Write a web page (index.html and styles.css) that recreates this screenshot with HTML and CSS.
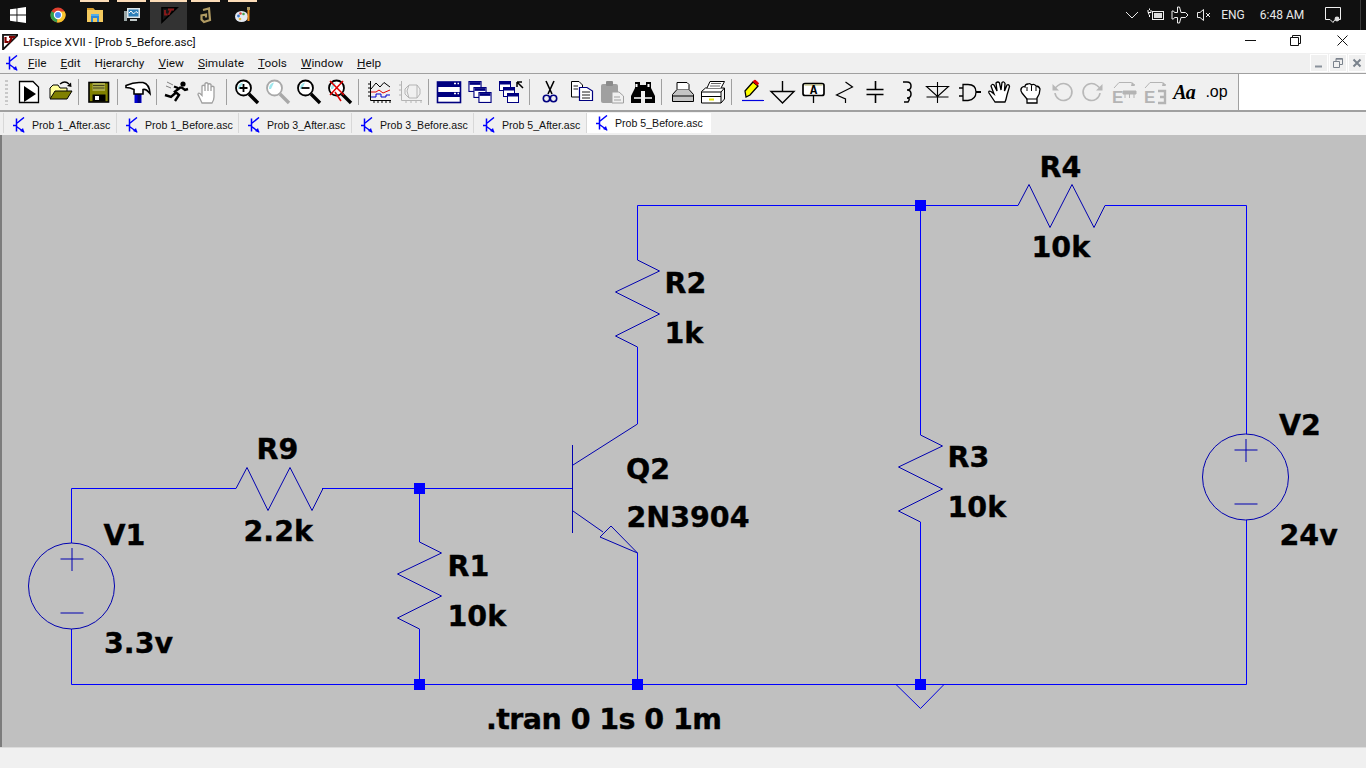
FILE: index.html
```html
<!DOCTYPE html>
<html lang="en">
<head>
<meta charset="utf-8">
<title>LTspice XVII - [Prob 5_Before.asc]</title>
<link rel="stylesheet" href="styles.css">
</head>
<body>
<svg class="sprite" aria-hidden="true">
  <symbol id="npn" viewBox="0 0 14 16">
    <path d="M1 8.5H4.5M4.5 1.5V14.5M4.5 6.5L12 .5M4.5 9.5L12 15" fill="none" stroke="#0000ff" stroke-width="1.5"/>
    <path d="M8 14L12.5 15.8L11 11Z" fill="#0000ff"/>
  </symbol>
  <symbol id="logo" viewBox="0 0 16 16">
    <path d="M1 .8H16L1 15.5Z" fill="#fff" stroke="#111" stroke-width="1.8"/>
    <path d="M3.5 3V8H6.5M7 3H13M10 3L7.5 8.5" fill="none" stroke="#800000" stroke-width="2.2"/>
  </symbol>
  <symbol id="mag" viewBox="0 0 26 26">
    <path d="M15 15L24 24" stroke="currentColor" stroke-width="3.4"/>
    <circle cx="9.5" cy="9" r="7.5" fill="#fff" stroke="currentColor" stroke-width="1.8"/>
    <path d="M4 10A6 6 0 0 1 9 3.5L6 10Z" fill="#9fe8ee"/>
  </symbol>
  <symbol id="win" viewBox="0 0 12 10">
    <rect x=".5" y=".5" width="11" height="9" fill="#fff" stroke="#000080"/>
    <rect x="1" y="1" width="10" height="2.5" fill="#000080"/>
  </symbol>
</svg>

<header class="taskbar">
  <div class="start">
    <svg class="ic16" viewBox="0 0 16 16"><path d="M0 2.3L6.5 1.4V7.6H0ZM7.4 1.3L16 0V7.6H7.4ZM0 8.5H6.5V14.7L0 13.8ZM7.4 8.5H16V16L7.4 14.8Z" fill="#fff"/></svg>
  </div>
  <div class="task">
    <svg class="ic16" viewBox="0 0 16 16"><circle cx="8" cy="8" r="7.5" fill="#e0402f"/><path d="M8 8L1.4 4.2A7.5 7.5 0 0 0 7 15.4Z" fill="#33a04f"/><path d="M8 8L7 15.4A7.5 7.5 0 0 0 14.7 4.5H8Z" fill="#f6c42d"/><circle cx="8" cy="8" r="3.6" fill="#4a8bf0" stroke="#fff" stroke-width="1.2"/></svg>
  </div>
  <div class="task open">
    <svg class="ic16" viewBox="0 0 16 16"><path d="M0 1H6L8 3H16V15H0Z" fill="#f4ca5e"/><path d="M0 1H6L7 3H0Z" fill="#d69a2a"/><path d="M4 8H12V15H10V11H6V15H4Z" fill="#2f8ad8"/><rect x="4" y="7" width="8" height="2" fill="#55aee8"/></svg>
  </div>
  <div class="task open">
    <svg class="ic16" viewBox="0 0 16 16"><rect y="4" width="3" height="10" fill="#9aa6a6"/><rect x="3" y="1" width="13" height="10" fill="#dfe7ea"/><rect x="4.5" y="2.5" width="10" height="7" fill="#2e7fb8"/><path d="M5 6L7 4L9.5 7L12 4.5L14 6" fill="none" stroke="#fff"/><rect x="6" y="12" width="7" height="2" fill="#c0c8c8"/></svg>
  </div>
  <div class="task open active">
    <svg class="ic16" viewBox="0 0 16 16"><path d="M1 .8H16L1 15.2Z" fill="#161616" stroke="#000" stroke-width="1.6"/><path d="M4 3V7.5H6.5M7 2.5H13M10 2.5L7.5 8" fill="none" stroke="#8b1a1a" stroke-width="1.8"/></svg>
  </div>
  <div class="task open">
    <svg class="ic16" viewBox="0 0 16 16"><path d="M5 3L11 1.5L12 13L6 15L3.5 12.5V8.5L8 7.5V10.5" fill="none" stroke="#b09a62" stroke-width="2.2"/></svg>
  </div>
  <div class="task open">
    <svg class="ic16" viewBox="0 0 16 16"><ellipse cx="6.5" cy="9.5" rx="6.5" ry="5.5" fill="#e4e9f2"/><circle cx="3.5" cy="9" r="1.4" fill="#3b79c8"/><circle cx="5.5" cy="6.5" r="1.3" fill="#d8423a"/><circle cx="8.5" cy="7" r="1.3" fill="#49a04e"/><circle cx="5" cy="12" r="1.3" fill="#e8b93a"/><path d="M13.5 1V14" stroke="#e88a1e" stroke-width="2"/><rect x="12" y="0" width="3" height="3" fill="#b09a62"/></svg>
  </div>
  <div class="tray">
    <span class="slot s24"><svg class="ic14" viewBox="0 0 14 14"><path d="M1 4L7 10L13 4" fill="none" stroke="#e8e8e8"/></svg></span>
    <span class="slot s24"><svg class="ic18" viewBox="0 0 18 14"><path d="M1 2V4.5H4V2M2.5 .5V2M1.5 4.5Q1.5 7 2.5 7V9" fill="none" stroke="#fff"/><rect x="5.5" y="3.5" width="11" height="8" fill="none" stroke="#eee"/><rect x="7" y="5" width="8" height="5" fill="#ddd"/></svg></span>
    <span class="slot s24"><svg class="ic18" viewBox="0 0 18 18"><path d="M6.5 1H8.5L10 6.5H14.5L17 9L14.5 11.5H10L8.5 17H6.5V11.5H3.5L2.5 13H1V5H2.5L3.5 6.5H6.5Z" fill="none" stroke="#eee"/></svg></span>
    <span class="slot s23"><svg class="ic16" viewBox="0 0 16 16"><path d="M1.5 5.5H4L7.5 2.5V13.5L4 10.5H1.5Z" fill="none" stroke="#e8e8e8"/><path d="M10 6L14 10M14 6L10 10" stroke="#e8e8e8"/></svg></span>
    <span class="slot s36 tray-text">ENG</span>
    <span class="slot s62 tray-text">6:48 AM</span>
    <span class="slot s40"><svg class="ic18" viewBox="0 0 18 18"><path d="M1.5 1.5H16.5V13.5H11L9 16.5L6 13.5H1.5Z" fill="none" stroke="#f0f0f0"/><circle cx="13" cy="13" r="2.4" fill="#ddd"/></svg></span>
    <span class="desk-line"></span>
  </div>
</header>

<div class="titlebar">
  <svg class="title-logo"><use href="#logo"/></svg>
  <span class="title-text">LTspice XVII - [Prob 5_Before.asc]</span>
  <span class="win-btn w46"><svg class="ic11" viewBox="0 0 11 11"><path d="M0 5.5H11" stroke="#111"/></svg></span>
  <span class="win-btn w45"><svg class="ic11" viewBox="0 0 11 11"><path d="M.5 2.5H8.5V10.5H.5ZM2.5 2V.5H10.5V8.5H9" fill="none" stroke="#111"/></svg></span>
  <span class="win-btn w48"><svg class="ic11" viewBox="0 0 11 11"><path d="M.5 .5L10.5 10.5M10.5 .5L.5 10.5" stroke="#111"/></svg></span>
</div>

<nav class="menubar">
  <svg class="menu-logo"><use href="#npn"/></svg>
  <span class="menu-item"><u>F</u>ile</span>
  <span class="menu-item"><u>E</u>dit</span>
  <span class="menu-item">H<u>i</u>erarchy</span>
  <span class="menu-item"><u>V</u>iew</span>
  <span class="menu-item"><u>S</u>imulate</span>
  <span class="menu-item"><u>T</u>ools</span>
  <span class="menu-item"><u>W</u>indow</span>
  <span class="menu-item"><u>H</u>elp</span>
  <div class="mdi">
    <span class="mdi-btn"><svg class="ic10" viewBox="0 0 10 10"><path d="M1 8.5H8" stroke="#8a929c" stroke-width="2"/></svg></span>
    <span class="mdi-btn"><svg class="ic10" viewBox="0 0 10 10"><path d="M.5 3.5H6.5V9.5H.5ZM3 3V.5H9.5V6.5H7M3 1.2H9.5" fill="none" stroke="#7a828c"/></svg></span>
    <span class="mdi-btn"><svg class="ic10" viewBox="0 0 10 10"><path d="M1.5 1.5L8.5 8.5M8.5 1.5L1.5 8.5" stroke="#7a828c" stroke-width="2"/></svg></span>
  </div>
</nav>

<div class="toolbar">
  <div class="tools">
    <span class="grip"></span>
    <span class="tb"><svg class="ic26" viewBox="0 0 26 26"><path d="M3.5 2.5H17L22.5 8V23.5H3.5Z" fill="#fff" stroke="#000" stroke-width="1.3"/><path d="M8 7L20 15L8 23Z"/></svg></span>
    <span class="tb"><svg class="ic26" viewBox="0 0 26 26"><path d="M3 19V9L6 6H11L13 9H20V12" fill="#ffff9a" stroke="#000"/><path d="M3 20L8 12H25L20 20Z" fill="#808000" stroke="#000"/><path d="M13 5Q18 1 22 5" fill="none" stroke="#000" stroke-width="1.3"/><path d="M20 7L24.5 8L24 3.5Z"/></svg></span>
    <span class="sep"></span>
    <span class="tb"><svg class="ic26" viewBox="0 0 26 26"><rect x="3" y="3.5" width="19.5" height="19.5" fill="#808000" stroke="#000" stroke-width="1.6"/><rect x="6.5" y="4" width="12.5" height="8" fill="#a9a94a"/><path d="M7 6.5H18.5M7 9H18.5" stroke="#000" stroke-width=".6"/><rect x="6.5" y="15.5" width="13" height="7" fill="#000"/><rect x="9" y="17" width="4" height="4" fill="#fff"/></svg></span>
    <span class="sep"></span>
    <span class="tb"><svg class="ic26" viewBox="0 0 26 26"><rect x="9.5" y="15" width="7" height="9" fill="#0000d0"/><rect x="12.5" y="15" width="3" height="9" fill="#000080"/><path d="M1 6.5Q8 3.5 14 3.5H18Q24.5 5 25 14.5Q21 9.5 18 10.5V15H9V10.5Q5 8.5 1 8.5Z" fill="#fff" stroke="#000" stroke-width="1.6"/></svg></span>
    <span class="sep"></span>
    <span class="tb"><svg class="ic26" viewBox="0 0 26 26"><path d="M17 8L11 12.5L15 16L11 22M17 8L21 11L24 10M14 9L10 7.5M11.5 14L7 18L1 16" fill="none" stroke="#000" stroke-width="2.4"/><circle cx="19" cy="5" r="2.6"/><path d="M3 3L9 6M2 7L7 9" stroke="#808080"/></svg></span>
    <span class="tb"><svg class="ic26" viewBox="0 0 26 26"><path d="M7 24L3 15.5Q3 13.5 5 14.5L7 16.5V7Q8.5 5.5 10 7V12V4.5Q11.5 3 13 4.5V12V5.5Q14.5 4 16 5.5V12V8Q17.5 6.5 19 8V18Q19 21 17 24Z" fill="#fff" stroke="#a0a0a0" stroke-width="1.3"/></svg></span>
    <span class="sep"></span>
    <span class="tb"><svg class="ic26"><use href="#mag"/><path d="M9.5 5V13M5.5 9H13.5" stroke="#000" stroke-width="1.8"/></svg></span>
    <span class="tb gray"><svg class="ic26"><use href="#mag"/></svg></span>
    <span class="tb"><svg class="ic26"><use href="#mag"/><path d="M5.5 9H13.5" stroke="#000" stroke-width="1.8"/></svg></span>
    <span class="tb"><svg class="ic26"><use href="#mag"/><path d="M3 2L17 16M16 2L3 16M8 13L14 22" stroke="#e00000" stroke-width="1.5"/></svg></span>
    <span class="sep"></span>
    <span class="tb"><svg class="ic26" viewBox="0 0 26 26"><path d="M4.5 2V21.5H25M4.5 5H2M4.5 9H2M4.5 13H2M4.5 17H2M8 21.5V24M12 21.5V24M16 21.5V24M20 21.5V24M24 21.5V24" fill="none" stroke="#000"/><path d="M5 10L10 4L14 8L18 3.5L24 8" fill="none" stroke="#000"/><path d="M5 13H10L13 11L17 14L24 11" fill="none" stroke="#e00000"/><path d="M5 18H10V15H15V18H20V16H24" fill="none" stroke="#0000d0"/></svg></span>
    <span class="tb"><svg class="ic26" viewBox="0 0 26 26"><path d="M4.5 2V21.5H25M4.5 6H2M4.5 11H2M4.5 16H2M9 21.5V24M14 21.5V24M19 21.5V24M24 21.5V24M8 10L12 6H20L23 10V15L20 19H12L8 15ZM12 6L10 12L12 19M20 6V19" fill="none" stroke="#b4b4b4"/></svg></span>
    <span class="sep"></span>
    <span class="tb"><svg class="ic26" viewBox="0 0 26 26"><rect x="1.5" y="3" width="23" height="20.5" fill="#fff" stroke="#000080" stroke-width="1.6"/><rect x="1.5" y="3" width="23" height="5" fill="#000080"/><rect x="1.5" y="13" width="23" height="5" fill="#000080"/><path d="M18 4.5H20M21.5 4.5H23M18 14.5H20M21.5 14.5H23" stroke="#fff" stroke-width="1.4"/></svg></span>
    <span class="tb"><svg class="ic26" viewBox="0 0 26 26"><use href="#win" x="1" y="2" width="14" height="11"/><use href="#win" x="6" y="8" width="14" height="11"/><use href="#win" x="11" y="13" width="14" height="11"/></svg></span>
    <span class="tb"><svg class="ic26" viewBox="0 0 26 26"><use href="#win" x="1" y="2" width="12" height="10"/><use href="#win" x="5" y="8" width="12" height="10"/><use href="#win" x="9" y="14" width="12" height="10"/><path d="M19 3H24M19 3V8M19 3L25 9" fill="none" stroke="#000" stroke-width="1.5"/></svg></span>
    <span class="sep"></span>
    <span class="tb"><svg class="ic26" viewBox="0 0 26 26"><path d="M9 2L15 15M17 2L11 15" stroke="#000" stroke-width="1.6"/><circle cx="9.5" cy="19.5" r="3.2" fill="none" stroke="#000080" stroke-width="1.6"/><circle cx="16.5" cy="19.5" r="3.2" fill="none" stroke="#000080" stroke-width="1.6"/></svg></span>
    <span class="tb"><svg class="ic26" viewBox="0 0 26 26"><path d="M3.5 2.5H11L14.5 6V18H3.5Z" fill="#fff" stroke="#000"/><path d="M11.5 8.5H19L24.5 12V21.5H11.5Z" fill="#fff" stroke="#000080" stroke-width="1.2"/><path d="M5.5 7H10M5.5 10H10M14 13H22M14 16H22M14 19H22" stroke="#000" stroke-width=".9"/></svg></span>
    <span class="tb"><svg class="ic26" viewBox="0 0 26 26"><rect x="2" y="5" width="17" height="19" rx="2" fill="#a0a0a0"/><rect x="7" y="2" width="7" height="5" rx="1" fill="#8a8a8a"/><path d="M13 13H20L24.5 17V24H13Z" fill="#f0f0f0" stroke="#a0a0a0"/><path d="M15 18H21M15 21H22" stroke="#a0a0a0"/></svg></span>
    <span class="tb"><svg class="ic26" viewBox="0 0 26 26"><path d="M5 3H10V6H16V3H21V9L25 17V24H15V12H11V24H1V17L5 9Z"/><path d="M4 19H11M15 19H22" stroke="#fff" stroke-width="1.4"/><rect x="5.5" y="5" width="2" height="3" fill="#fff"/><rect x="17.5" y="5" width="2" height="3" fill="#fff"/></svg></span>
    <span class="sep"></span>
    <span class="tb"><svg class="ic26" viewBox="0 0 26 26"><path d="M3.5 15.5L8 10.5H20L24.5 15.5V22.5H3.5Z" fill="#c4c4c4" stroke="#000"/><path d="M8 10.5V3.5H18L20 5.5V10.5" fill="#fff" stroke="#000"/><path d="M3.5 17H24.5" stroke="#000"/></svg></span>
    <span class="tb"><svg class="ic26" viewBox="0 0 26 26"><path d="M1.5 12.5L5.5 9H24.5L21 13V24H1.5Z" fill="#fff" stroke="#000"/><path d="M21 13H1.5M24.5 9V20L21 24M1.5 17.5H21" fill="none" stroke="#000"/><path d="M7 9L10 2.5H24.5L21 9" fill="#fff" stroke="#000"/><path d="M11 4.5H21M10 7H20" stroke="#666"/><rect x="9" y="19.5" width="5" height="2" fill="#e4e400"/></svg></span>
    <span class="sep"></span>
    <span class="tb"><svg class="ic26" viewBox="0 0 26 26"><path d="M3 21.5H25" stroke="#0000e0" stroke-width="1.2"/><path d="M7 18L6 12L14 3L19 7L11 16Z" fill="#ffff00" stroke="#000" stroke-width="1.3"/><path d="M14 2.5L16 1L19.5 4L18.5 6Z" fill="#e00000" stroke="#e00000"/></svg></span>
    <span class="tb"><svg class="ic26" viewBox="0 0 26 26"><path d="M12.5 2V12.5M1 12.5H24L12.5 24Z" fill="none" stroke="#000" stroke-width="1.4"/></svg></span>
    <span class="tb"><svg class="ic26" viewBox="0 0 26 26"><rect x="2" y="4.5" width="21" height="12" rx="2" fill="#fff" stroke="#000" stroke-width="1.7"/><path d="M3.5 6H21.5" stroke="#a0a040" stroke-width=".8"/><path d="M12.5 16.5V24" stroke="#000" stroke-width="1.3"/><text class="glyph-a" x="12.5" y="14.5">A</text></svg></span>
    <span class="tb"><svg class="ic26" viewBox="0 0 26 26"><path d="M13.5 3L20.5 8L4.5 16L13.5 20V24" fill="none" stroke="#000" stroke-width="1.2"/></svg></span>
    <span class="tb"><svg class="ic26" viewBox="0 0 26 26"><path d="M12.5 2V10M12.5 16V24M3.5 10.5H20.5M3.5 15.5H20.5" stroke="#000" stroke-width="1.6"/></svg></span>
    <span class="tb"><svg class="ic26" viewBox="0 0 26 26"><path d="M9 3H13Q17 3 17 7T13 11Q17 11 17 15T13 19Q17 19 14 23H10" fill="none" stroke="#000" stroke-width="1.5"/></svg></span>
    <span class="tb"><svg class="ic26" viewBox="0 0 26 26"><path d="M12.5 3V24M1.5 7.5H23.5L12.5 17.5ZM1.5 18H23.5" fill="none" stroke="#000" stroke-width="1.1"/></svg></span>
    <span class="tb"><svg class="ic26" viewBox="0 0 26 26"><path d="M7 5.5H12Q20 5.5 20 13T12 21.5H7ZM3 9H7M3 17H7" fill="none" stroke="#000" stroke-width="1.3"/><path d="M20 13H25" stroke="#000" stroke-width="2"/></svg></span>
    <span class="tb"><svg class="ic26" viewBox="0 0 26 26"><path d="M8 23L2 14Q1 11.5 4 12.5L7 15L4 7Q5 4.5 7 6L10 12L9 4Q11 2 12.5 4L14 11L15 3.5Q17 2 18 4.5L17.5 12L20 6Q22 5 22.5 7.5L20 16Q19 21 18 23Z" fill="#fff" stroke="#000" stroke-width="1.3"/></svg></span>
    <span class="tb"><svg class="ic26" viewBox="0 0 26 26"><path d="M9 24V20L4 14Q2 11 3.5 9Q5 7 7 8Q7 5 10 5Q12 4 13.5 6Q16 4.5 18 7Q21 7 22 10Q22 15 19 19V24Z" fill="#fff" stroke="#000" stroke-width="1.3"/><path d="M9 8V12M13.5 6.5V12M18 8V12M8 20H19" stroke="#000"/></svg></span>
    <span class="tb"><svg class="ic26" viewBox="0 0 26 26"><path d="M6 14A8.5 8.5 0 1 0 9 6.5L5 10" fill="none" stroke="#b8b8b8" stroke-width="1.6"/><path d="M3.5 5V11.5H10Z" fill="#b8b8b8"/></svg></span>
    <span class="tb"><svg class="ic26" viewBox="0 0 26 26"><path d="M20 14A8.5 8.5 0 1 1 17 6.5L21 10" fill="none" stroke="#b8b8b8" stroke-width="1.6"/><path d="M22.5 5V11.5H16Z" fill="#b8b8b8"/></svg></span>
    <span class="tb"><svg class="ic26" viewBox="0 0 26 26"><path d="M3 9L8 3.5H20L24 6" fill="none" stroke="#b4b4b4"/><path d="M21 3L24 7H20Z" fill="#b4b4b4"/><text class="glyph-e" x="1" y="24">E</text><path d="M12 12H25V15H12ZM14 15V19M18.5 15V19M23 15V19" fill="#b4b4b4" stroke="#b4b4b4"/></svg></span>
    <span class="tb"><svg class="ic26" viewBox="0 0 26 26"><path d="M3 9L8 3.5H20L24 6" fill="none" stroke="#b4b4b4"/><path d="M21 3L24 7H20Z" fill="#b4b4b4"/><text class="glyph-e" x="2" y="24">E</text><path d="M16 12H23V24H16M18 18H23" fill="none" stroke="#b4b4b4" stroke-width="2.4"/></svg></span>
    <span class="tb"><span class="aa">Aa</span></span>
    <span class="tb"><span class="op">.op</span></span>
  </div>
</div>

<div class="tabs">
  <span class="tab short"><svg class="tab-ic"><use href="#npn"/></svg>Prob 1_After.asc</span>
  <span class="tab long"><svg class="tab-ic"><use href="#npn"/></svg>Prob 1_Before.asc</span>
  <span class="tab short"><svg class="tab-ic"><use href="#npn"/></svg>Prob 3_After.asc</span>
  <span class="tab long"><svg class="tab-ic"><use href="#npn"/></svg>Prob 3_Before.asc</span>
  <span class="tab short"><svg class="tab-ic"><use href="#npn"/></svg>Prob 5_After.asc</span>
  <span class="tab current"><svg class="tab-ic"><use href="#npn"/></svg>Prob 5_Before.asc</span>
</div>

<main class="canvas">
  <svg class="schematic" viewBox="2 135 1364 612">
    <defs>
      <polyline id="rv" points="0,0 22,11 -22,32 22,54 -22,76 0,87"/>
      <polyline id="rh" points="0,0 11,-21 32,22 54,-21 76,22 87,0"/>
      <g id="vs">
        <circle cx="0" cy="0" r="43"/>
        <path d="M-11 -27H12M.5 -38V-15M-11 27H12"/>
      </g>
    </defs>
    <path class="wire" d="M637.5 260V205.5H1018M1105 205.5H1246.5V434M1246.5 520V684.5H71.5V629M71.5 543V488.5H236M322 488.5H572M419.5 488.5V542M419.5 629V684.5M920.5 205.5V435M920.5 522V684.5M637.5 347V424M637.5 553V684.5"/>
    <g class="sym">
      <use href="#rv" x="637.5" y="260"/>
      <use href="#rv" x="920.5" y="435"/>
      <use href="#rv" x="419.5" y="542"/>
      <use href="#rh" x="1018" y="205.5"/>
      <use href="#rh" x="236" y="488.5"/>
      <use href="#vs" x="1245.5" y="477"/>
      <use href="#vs" x="71.5" y="586"/>
      <path d="M572.5 445V533M573 465L637.5 424M573 511L603 532M611 526L600 537L637.5 553Z"/>
    </g>
    <path class="wire-thin" d="M896 684.5L920.5 708.5L944 684.5"/>
    <g class="dots">
      <rect x="915" y="200" width="11" height="11"/>
      <rect x="414" y="483" width="11" height="11"/>
      <rect x="414" y="679" width="11" height="11"/>
      <rect x="632" y="679" width="11" height="11"/>
      <rect x="915" y="679" width="11" height="11"/>
    </g>
    <g class="labels">
      <text x="1039.5" y="177">R4</text>
      <text x="1031.5" y="257">10k</text>
      <text x="664.5" y="293">R2</text>
      <text x="664.5" y="343">1k</text>
      <text x="947.5" y="467">R3</text>
      <text x="947.5" y="517">10k</text>
      <text x="1279" y="435">V2</text>
      <text x="1279.5" y="545">24v</text>
      <text x="626" y="479">Q2</text>
      <text x="626.5" y="527">2N3904</text>
      <text x="256.5" y="459">R9</text>
      <text x="243.5" y="541">2.2k</text>
      <text x="447.5" y="576">R1</text>
      <text x="447.5" y="626">10k</text>
      <text x="103.5" y="545">V1</text>
      <text x="104" y="653">3.3v</text>
      <text class="directive" x="486" y="729">.tran 0 1s 0 1m</text>
    </g>
  </svg>
</main>

<footer class="statusbar"></footer>
</body>
</html>
```

FILE: styles.css
```css
* { box-sizing: border-box; }
html, body { margin: 0; padding: 0; }
body {
  width: 1366px;
  height: 768px;
  overflow: hidden;
  display: flex;
  flex-direction: column;
  background: #f0f0f0;
  font-family: Roboto, "Liberation Sans", sans-serif;
  color: #000;
}
.sprite { display: none; }
svg { display: block; flex: none; overflow: visible; }
.ic10 { width: 10px; height: 10px; }
.ic11 { width: 11px; height: 11px; }
.ic14 { width: 14px; height: 14px; }
.ic16 { width: 16px; height: 16px; }
.ic18 { width: 18px; height: 18px; }
.ic26 { width: 26px; height: 26px; }

/* Taskbar */
.taskbar {
  height: 30px;
  flex: none;
  display: flex;
  background: #101010;
}
.start {
  width: 39px;
  padding-right: 3px;
  display: flex;
  align-items: center;
  justify-content: center;
}
.task {
  position: relative;
  width: 37px;
  display: flex;
  align-items: center;
  justify-content: center;
}
.task.open::before {
  content: "";
  position: absolute;
  top: 0;
  left: 4px;
  right: 4px;
  height: 2px;
  background: #fcdcb8;
}
.task.active { background: #333; }
.task.active::before { left: 0; right: 0; }
.tray {
  margin-left: auto;
  display: flex;
  align-items: stretch;
  color: #e8e8e8;
}
.slot {
  display: flex;
  align-items: center;
  justify-content: center;
}
.s23 { width: 23px; }
.s24 { width: 24px; }
.s36 { width: 36px; }
.s40 { width: 40px; }
.s62 { width: 62px; }
.tray-text { font-size: 12px; }
.desk-line {
  width: 13px;
  border-right: 5px solid #101010;
  background: linear-gradient(to right, #101010 7px, #3a3a3a 7px);
}

/* Title bar */
.titlebar {
  height: 23px;
  flex: none;
  display: flex;
  align-items: center;
  background: #fff;
}
.title-logo { width: 16px; height: 16px; margin: 0 5px 0 2px; }
.title-text { font-size: 11.66px; flex: 1; color: #111; }
.win-btn { display: flex; justify-content: center; padding-bottom: 2px; }
.w45 { width: 45px; }
.w46 { width: 46px; }
.w48 { width: 48px; }

/* Menu */
.menubar {
  height: 21px;
  flex: none;
  display: flex;
  align-items: center;
  gap: 14px;
  padding-left: 5px;
  background: #f0f0f0;
  border-bottom: 1px solid #a0a0a0;
  font-size: 11.8px;
}
.menu-logo { width: 14px; height: 16px; margin-right: -5px; }
.menu-item { white-space: nowrap; color: #111; }
.mdi { margin-left: auto; display: flex; gap: 1px; }
.mdi-btn {
  width: 18px;
  height: 18px;
  display: flex;
  align-items: center;
  justify-content: center;
  border: 1px solid #fff;
}

/* Toolbar */
.toolbar {
  height: 38px;
  flex: none;
  display: flex;
  background: #fff;
  border-bottom: 2px solid #a0a0a0;
}
.tools {
  width: 1239px;
  display: flex;
  align-items: center;
  padding-left: 13px;
  position: relative;
  background: #f0f0f0;
  border-right: 1px solid #a0a0a0;
}
.grip {
  position: absolute;
  left: 5px;
  top: 6px;
  width: 3px;
  height: 25px;
  background: repeating-linear-gradient(to bottom, #c8c8c8 0 2px, transparent 2px 4px);
}
.tb {
  width: 31px;
  height: 26px;
  flex: none;
  display: flex;
  align-items: center;
  justify-content: center;
}
.tb.gray { color: #a8a8a8; }
.sep {
  width: 8px;
  height: 26px;
  flex: none;
  display: flex;
  background: linear-gradient(to right, transparent 3px, #a0a0a0 3px, #a0a0a0 4px, transparent 4px);
}
.glyph-a {
  font: bold 12px "Liberation Mono", monospace;
  text-anchor: middle;
}
.glyph-e {
  font: bold 17px "Liberation Sans", sans-serif;
  fill: #b4b4b4;
}
.aa {
  font: italic bold 20px "Liberation Serif", serif;
  letter-spacing: -1px;
  margin-left: -3px;
}
.op {
  font: 16px "Liberation Sans", sans-serif;
}

/* Tabs */
.tabs {
  height: 23px;
  flex: none;
  display: flex;
  align-items: flex-start;
  padding: 1px 0 0 3px;
  background: #f0f0f0;
}
.tab {
  height: 20px;
  display: flex;
  align-items: center;
  flex: none;
  padding-left: 8px;
  padding-top: 3px;
  font: 10.6px "Liberation Sans", sans-serif;
  color: #111;
  white-space: nowrap;
  border-right: 1px solid #d8d8d8;
  border-left: 1px solid #d8d8d8;
  margin-right: -1px;
}
.short { width: 114px; }
.long { width: 123px; }
.current { width: 124px; background: #fff; border: 0; margin-left: 1px; padding-top: 0; }
.tab-ic { width: 14px; height: 16px; margin-right: 6px; }

/* Schematic */
.canvas {
  height: 612px;
  flex: none;
  background: #c0c0c0;
  border-left: 2px solid #7c7c7c;
}
.schematic { width: 1364px; height: 612px; }
.wire { fill: none; stroke: #0000ff; stroke-width: 1; }
.wire-thin { fill: none; stroke: #0000e0; stroke-width: 1; }
.sym { fill: none; stroke: #0000b0; stroke-width: 1; }
.dots { fill: #0000ff; }
.labels {
  font: bold 28.5px "DejaVu Sans", sans-serif;
  fill: #000;
  stroke: #000;
  stroke-width: .35px;
}
.directive { letter-spacing: -.55px; }

/* Status bar */
.statusbar {
  flex: 1;
  background: #f0f0f0;
  border-top: 1px solid #dcdcdc;
}
```
